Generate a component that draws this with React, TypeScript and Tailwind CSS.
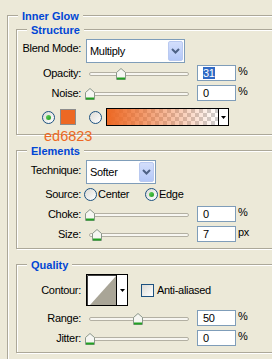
import React from 'react'

function Group({ title, className, children }: { title: string; className: string; children: React.ReactNode }) {
  return (
    <div className={`border border-[#aca899] shadow-[inset_1px_1px_0_#fff,1px_1px_0_#fff] ${className}`}>
      <div className="-mt-[6px] w-fit bg-[#ece9d8] px-[4px] text-[11px] leading-[13px] font-bold tracking-normal text-[#0046d5] ml-[10px]">
        {title}
      </div>
      {children}
    </div>
  )
}

function Radio({ checked }: { checked?: boolean }) {
  return (
    <span className="flex h-[13px] w-[13px] shrink-0 items-center justify-center rounded-full border border-[#1c5180] bg-gradient-to-br from-[#dcdbd5] to-white">
      {checked && <span className="h-[5px] w-[5px] rounded-full bg-gradient-to-br from-[#5ed35a] to-[#1e9a1e]" />}
    </span>
  )
}

function Chevron() {
  return (
    <svg width="9" height="6" viewBox="0 0 9 6">
      <path d="M1 1 L4.5 4.5 L8 1" fill="none" stroke="#4d6185" strokeWidth="2" />
    </svg>
  )
}

function Arrow() {
  return (
    <svg width="5" height="3" viewBox="0 0 5 3">
      <path d="M0 0 H5 L2.5 3 Z" fill="#000" />
    </svg>
  )
}

function Select({ value, width }: { value: string; width: string }) {
  return (
    <div className={`ml-[5px] flex h-[24px] items-center border border-[#7f9db9] bg-white ${width}`}>
      <span className="flex-1 pl-[3px]">{value}</span>
      <span className="mr-px flex h-[20px] w-[15px] items-center justify-center rounded-[2px] border border-[#b9c9f0] bg-gradient-to-b from-[#d3defb] to-[#b4c8f8]">
        <Chevron />
      </span>
    </div>
  )
}

function Thumb({ pos }: { pos: string }) {
  return (
    <svg className={`absolute top-[3px] ${pos}`} width="10" height="12" viewBox="0 0 10 12">
      <path d="M5 0.5 L9.5 4.5 V11.5 H0.5 V4.5 Z" fill="#f6f6f2" stroke="#8a978a" />
      <path d="M1 10.5 H9" stroke="#21a121" strokeWidth="2" />
    </svg>
  )
}

function NumBox({ children }: { children: React.ReactNode }) {
  return (
    <div className="ml-[3px] flex h-[16px] w-[39px] items-center border border-[#7f9db9] bg-white pl-[5px] leading-[12px]">
      {children}
    </div>
  )
}

function SliderRow({ label, pos, value, unit = '%', className = '' }: { label: string; pos: string; value: React.ReactNode; unit?: string; className?: string }) {
  return (
    <div className={`flex h-[16px] items-center ${className}`}>
      <span className="w-[64px] text-right leading-[13px]">{label}</span>
      <div className="relative ml-[3px] h-[16px] w-[110px]">
        <div className="absolute left-[5px] top-[7px] h-[4px] w-[100px] rounded-[2px] border border-[#b3b0a3] bg-[#f7f6f1]" />
        <Thumb pos={pos} />
      </div>
      <NumBox>{value}</NumBox>
      <span className="ml-[2px] self-start leading-[13px]">{unit}</span>
    </div>
  )
}

export default function App() {
  return (
    <div className="relative h-[359px] w-[272px] overflow-hidden bg-[#ece9d8] pt-[15px] font-['Liberation_Sans',Arial,sans-serif] text-[11px] tracking-[-0.3px] text-black">
      <Group title="Inner Glow" className="ml-[7px] h-[400px] w-[300px]">
        <Group title="Structure" className="ml-[8px] mt-[6px] w-[290px] pb-[8px]">
          <div className="mt-[2px] flex items-start">
            <span className="w-[64px] pt-[3px] text-right leading-[13px]">Blend Mode:</span>
            <Select value="Multiply" width="w-[99px]" />
          </div>
          <SliderRow
            className="mt-[2px]"
            label="Opacity:"
            pos="left-[32px]"
            value={<span className="bg-[#316ac5] text-white">31</span>}
          />
          <SliderRow className="mt-[4px]" label="Noise:" pos="left-[1px]" value="0" />
          <div className="mt-[7px] flex h-[18px] items-center">
            <span className="ml-[25px]"><Radio checked /></span>
            <span className="ml-[5px] h-[16px] w-[16px] border border-[#8c8c8c] bg-[#ed6823]" />
            <span className="ml-[13px]"><Radio /></span>
            <div className="ml-[4px] flex h-[18px] w-[123px] border border-black bg-white">
              <div className="flex-1 bg-[repeating-conic-gradient(#cfcfcf_0_25%,#fff_0_50%)] bg-[length:8px_8px]">
                <div className="h-full w-full bg-gradient-to-r from-[#ed6823] to-[#ed682300]" />
              </div>
              <div className="flex w-[10px] items-center justify-center border-l border-black">
                <Arrow />
              </div>
            </div>
          </div>
        </Group>

        <Group title="Elements" className="ml-[8px] mt-[15px] w-[290px] pb-[6px]">
          <div className="mt-[2px] flex items-start">
            <span className="w-[64px] pt-[4px] text-right leading-[13px]">Technique:</span>
            <Select value="Softer" width="w-[70px]" />
          </div>
          <div className="mt-[4px] flex h-[13px] items-center">
            <span className="w-[64px] text-right leading-[13px]">Source:</span>
            <div className="ml-[3px] flex w-[61px] items-center gap-[1px]">
              <Radio />
              <span className="leading-[13px]">Center</span>
            </div>
            <div className="flex items-center gap-[1px]">
              <Radio checked />
              <span className="leading-[13px]">Edge</span>
            </div>
          </div>
          <SliderRow className="mt-[5px]" label="Choke:" pos="left-[1px]" value="0" />
          <SliderRow className="mt-[4px]" label="Size:" pos="left-[8px]" value="7" unit="px" />
        </Group>

        <Group title="Quality" className="ml-[8px] mt-[15px] w-[290px] pb-[6px]">
          <div className="mt-[2px] flex h-[32px] items-center">
            <span className="w-[64px] text-right leading-[13px]">Contour:</span>
            <div className="ml-[5px] flex h-[32px] w-[42px] border border-black bg-white">
              <svg width="29" height="30" viewBox="0 0 29 30" className="shrink-0">
                <rect x="0" y="0" width="29" height="30" fill="#fff" />
                <path d="M0.5 0.5 H29 M0.5 0.5 V30" stroke="#404040" />
                <polygon points="3,30 29,1 29,30" fill="#a9a597" />
              </svg>
              <div className="flex flex-1 items-center justify-center border-l border-black">
                <Arrow />
              </div>
            </div>
            <span className="ml-[13px] h-[13px] w-[13px] border border-[#1c5180] bg-gradient-to-br from-[#dcdbd5] to-white" />
            <span className="ml-[3px] leading-[13px]">Anti-aliased</span>
          </div>
          <SliderRow className="mt-[4px]" label="Range:" pos="left-[49px]" value="50" />
          <SliderRow className="mt-[4px]" label="Jitter:" pos="left-[1px]" value="0" />
        </Group>
      </Group>

      <span className="absolute left-[44px] top-[128px] text-[14.5px] leading-[16px] tracking-normal text-[#ed6823]">
        ed6823
      </span>
    </div>
  )
}
